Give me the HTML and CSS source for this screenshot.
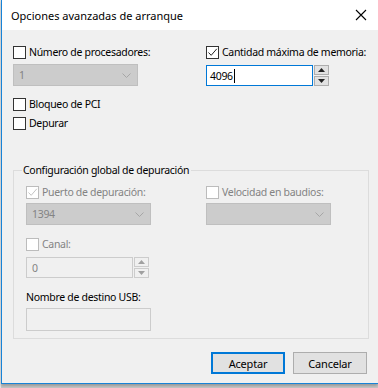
FILE: index.html
```html
<!DOCTYPE html>
<html lang="es">
<head>
<meta charset="utf-8">
<title>Opciones avanzadas de arranque</title>
<link rel="stylesheet" href="styles.css">
</head>
<body>
<div class="desk">
  <div class="window">
    <div class="titlebar">
      <span class="title">Opciones avanzadas de arranque</span>
      <svg class="close" width="12" height="12" viewBox="0 0 12 12"><path d="M1 1 L11 11 M11 1 L1 11" stroke="#000" stroke-width="1.1" fill="none"/></svg>
    </div>
    <div class="content">
      <div class="cols">
        <div class="col">
          <label class="check"><span class="box"></span><span class="lbl">Número de procesadores:</span></label>
          <div class="combo disabled"><span class="val">1</span><svg class="chev" width="9" height="5" viewBox="0 0 9 5"><path d="M0.5 0.5 L4.5 4.5 L8.5 0.5" stroke="#a6a6a6" fill="none"/></svg></div>
          <label class="check pci"><span class="box"></span><span class="lbl">Bloqueo de PCI</span></label>
          <label class="check dep"><span class="box"></span><span class="lbl">Depurar</span></label>
        </div>
        <div class="col col2">
          <label class="check"><span class="box checked"><svg width="11" height="11" viewBox="0 0 11 11"><path d="M1.5 5.5 L4.2 8.3 L9.8 1.8" stroke="#222" stroke-width="1" fill="none"/></svg></span><span class="lbl">Cantidad máxima de memoria:</span></label>
          <div class="spin">
            <div class="edit focus"><span>4096</span><span class="caret"></span></div>
            <div class="spinbtns">
              <span class="sb up"><svg width="7" height="4" viewBox="0 0 7 4"><path d="M0 4 L3.5 0 L7 4Z" fill="#222"/></svg></span>
              <span class="sb dn"><svg width="7" height="4" viewBox="0 0 7 4"><path d="M0 0 L3.5 4 L7 0Z" fill="#222"/></svg></span>
            </div>
          </div>
        </div>
      </div>
      <fieldset class="group">
        <legend>Configuración global de depuración</legend>
        <div class="gcols">
          <div class="gcol">
            <label class="check dis"><span class="box checked"><svg width="11" height="11" viewBox="0 0 11 11"><path d="M1.5 5.5 L4.2 8.3 L9.8 1.8" stroke="#c4c4c4" stroke-width="1" fill="none"/></svg></span><span class="lbl">Puerto de depuración:</span></label>
            <div class="combo disabled"><span class="val">1394</span><svg class="chev" width="9" height="5" viewBox="0 0 9 5"><path d="M0.5 0.5 L4.5 4.5 L8.5 0.5" stroke="#a6a6a6" fill="none"/></svg></div>
            <label class="check dis canal"><span class="box"></span><span class="lbl">Canal:</span></label>
            <div class="spin dspin">
              <div class="edit dedit"><span>0</span></div>
              <div class="spinbtns dbtns">
                <span class="sb up"><svg width="7" height="4" viewBox="0 0 7 4"><path d="M0 4 L3.5 0 L7 4Z" fill="#a0a0a0"/></svg></span>
                <span class="sb dn"><svg width="7" height="4" viewBox="0 0 7 4"><path d="M0 0 L3.5 4 L7 0Z" fill="#a0a0a0"/></svg></span>
              </div>
            </div>
            <div class="usblbl">Nombre de destino USB:</div>
            <div class="usb"></div>
          </div>
          <div class="gcol gcol2">
            <label class="check dis"><span class="box"></span><span class="lbl">Velocidad en baudios:</span></label>
            <div class="combo disabled"><span class="val"></span><svg class="chev" width="9" height="5" viewBox="0 0 9 5"><path d="M0.5 0.5 L4.5 4.5 L8.5 0.5" stroke="#a6a6a6" fill="none"/></svg></div>
          </div>
        </div>
      </fieldset>
      <div class="buttons">
        <button class="btn default">Aceptar</button>
        <button class="btn">Cancelar</button>
      </div>
    </div>
  </div>
</div>
</body>
</html>
```
FILE: styles.css
```css
* { box-sizing: border-box; }
html, body { margin: 0; padding: 0; }
body {
  width: 378px;
  height: 388px;
  overflow: hidden;
  background: #d9d9d9;
  font-family: "Noto Sans", "Segoe UI", sans-serif;
  font-size: 11px;
  color: #000;
  white-space: nowrap;
}
.desk {
  height: 388px;
  padding-left: 1px;
  background: linear-gradient(to right, #e6e6e6 1px, #c9c9c9 1px);
}
.window {
  width: 377px;
  height: 384px;
  border-left: 1px solid #1883d7;
  border-bottom: 1px solid #1883d7;
  background: #f0f0f0;
  display: flex;
  flex-direction: column;
  box-shadow: 0 2px 3px rgba(0,0,0,0.25);
}
.titlebar {
  height: 30px;
  background: #fff;
  display: flex;
  align-items: center;
  padding-left: 9px;
  padding-right: 10px;
  justify-content: space-between;
}
.title { font-size: 11px; color: #000; }
.close { display: block; margin-right: 1px; }
.content {
  padding: 15px 0 0 11px;
  flex: 1;
  font-size: 10.5px;
  letter-spacing: -0.3px;
}
.cols { display: flex; }
.col { width: 193px; flex: none; display: flex; flex-direction: column; }
.col2 { flex: 1; width: auto; min-width: 0; }
.check {
  display: flex;
  align-items: center;
  height: 14px;
  gap: 3px;
  line-height: 14px;
}
.box {
  width: 13px;
  height: 13px;
  border: 1px solid #333;
  background: #fff;
  display: flex;
  align-items: center;
  justify-content: center;
  flex: none;
}
.check.dis { color: #838383; }
.check.dis .box { border-color: #bcbcbc; background: #fff; }
.combo {
  margin-top: 5px;
  width: 125px;
  height: 22px;
  border: 1px solid #bfbfbf;
  background: #cccccc;
  display: flex;
  align-items: center;
  justify-content: space-between;
  padding: 0 6px 0 5px;
  color: #838383;
}
.chev { display: block; }
.pci { margin-top: 11px; }
.dep { margin-top: 5px; }
.spin { margin-top: 6px; display: flex; gap: 1px; height: 21px; }
.edit {
  width: 107px;
  height: 21px;
  border: 1px solid #7a7a7a;
  background: #fff;
  display: flex;
  align-items: center;
  padding-left: 3px;
}
.edit.focus { border-color: #0078d7; }
.caret { width: 1px; height: 14px; background: #000; margin-left: 1px; }
.spinbtns { display: flex; flex-direction: column; width: 15px; gap: 1px; }
.sb {
  flex: 1;
  background: #e1e1e1;
  border: 1px solid #adadad;
  display: flex;
  align-items: center;
  justify-content: center;
}
.group {
  margin: 33px 0 0 0;
  width: 356px;
  height: 176px;
  border: 1px solid #dcdcdc;
  padding: 8px 0 0 12px;
  min-width: 0;
}
.group legend {
  padding: 0 2px 0 1px;
  margin-left: -4px;
  line-height: 14px;
}
.gcols { display: flex; }
.gcol { width: 180px; flex: none; display: flex; flex-direction: column; }
.gcol2 { flex: 1; width: auto; min-width: 0; }
.gcol .combo { margin-top: 4px; }
.canal { margin-top: 12px; }
.dspin { margin-top: 6px; width: 125px; }
.dedit { width: 107px; border-color: #cccccc; background: #f0f0f0; color: #838383; padding-left: 5px; }
.dbtns .sb { background: #f0f0f0; border-color: #cccccc; }
.usblbl { margin-top: 12px; line-height: 14px; color: #000; }
.usb { margin-top: 4px; width: 125px; height: 23px; border: 1px solid #cccccc; background: #f0f0f0; }
.buttons {
  display: flex;
  justify-content: flex-end;
  gap: 8px;
  margin-top: 13px;
  padding-right: 11px;
}
.btn {
  width: 74px;
  height: 22px;
  background: #e1e1e1;
  border: 1px solid #adadad;
  font-family: inherit;
  font-size: 11px;
  letter-spacing: -0.2px;
  color: #000;
  padding: 0;
}
.btn.default { border: 2px solid #0078d7; }
```
